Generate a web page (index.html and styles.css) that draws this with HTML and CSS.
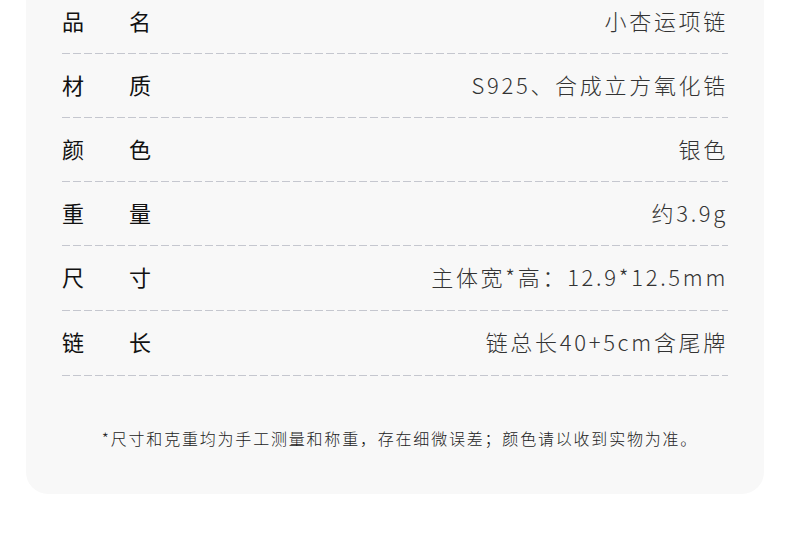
FILE: index.html
```html
<!DOCTYPE html>
<html lang="zh-CN">
<head>
  <meta charset="UTF-8">
  <title>商品参数</title>
  <link rel="stylesheet" href="styles.css">
</head>
<body>
  <!-- 参数卡片 -->
  <section class="card">
    <div class="spec-list">
      <div class="spec-row">
        <span class="spec-label">品名</span>
        <span class="spec-value">小杏运项链</span>
      </div>
      <div class="spec-row">
        <span class="spec-label">材质</span>
        <span class="spec-value">S925、合成立方氧化锆</span>
      </div>
      <div class="spec-row">
        <span class="spec-label">颜色</span>
        <span class="spec-value">银色</span>
      </div>
      <div class="spec-row">
        <span class="spec-label">重量</span>
        <span class="spec-value">约3.9g</span>
      </div>
      <div class="spec-row">
        <span class="spec-label">尺寸</span>
        <span class="spec-value">主体宽*高：12.9*12.5mm</span>
      </div>
      <div class="spec-row">
        <span class="spec-label">链长</span>
        <span class="spec-value">链总长40+5cm含尾牌</span>
      </div>
    </div>

    <p class="note">*尺寸和克重均为手工测量和称重，存在细微误差；颜色请以收到实物为准。</p>
  </section>
</body>
</html>
```

FILE: styles.css
```css
body {
  margin: 0;
  background: #ffffff;
  font-family: "Noto Sans CJK SC", "Noto Sans", sans-serif;
  color: #222;
}

/* ===== 卡片 ===== */
.card {
  width: 738px;
  margin-left: 26px;
  padding: 0 36px;
  box-sizing: border-box;
  background: #f8f8f8;
  border-radius: 0 0 22px 22px;
  overflow: hidden;
}

.spec-list {
  margin-top: -10px;
}

.spec-row {
  height: 59px;
  padding-bottom: 4px;
  display: flex;
  align-items: center;
  justify-content: space-between;
  border-bottom: 1px dashed transparent;
  background-image: repeating-linear-gradient(to right, #c5c7cf 0 8px, transparent 8px 11px);
  background-size: 100% 1px;
  background-repeat: no-repeat;
  background-position: left bottom;
  background-origin: border-box;
}

.spec-row:nth-child(n+5) {
  height: 60px;
}

.spec-label {
  font-size: 22px;
  font-weight: 400;
  color: #111;
  letter-spacing: 45px;
  line-height: 30px;
}

.spec-value {
  font-size: 22px;
  font-weight: 300;
  color: #333;
  letter-spacing: 2.7px;
  line-height: 30px;
}

/* ===== 说明文字 ===== */
.note {
  margin: 0;
  padding: 50px 0 44px 10px;
  text-align: center;
  font-size: 16px;
  font-weight: 300;
  line-height: 24px;
  letter-spacing: 1.8px;
  color: #222;
}
```
